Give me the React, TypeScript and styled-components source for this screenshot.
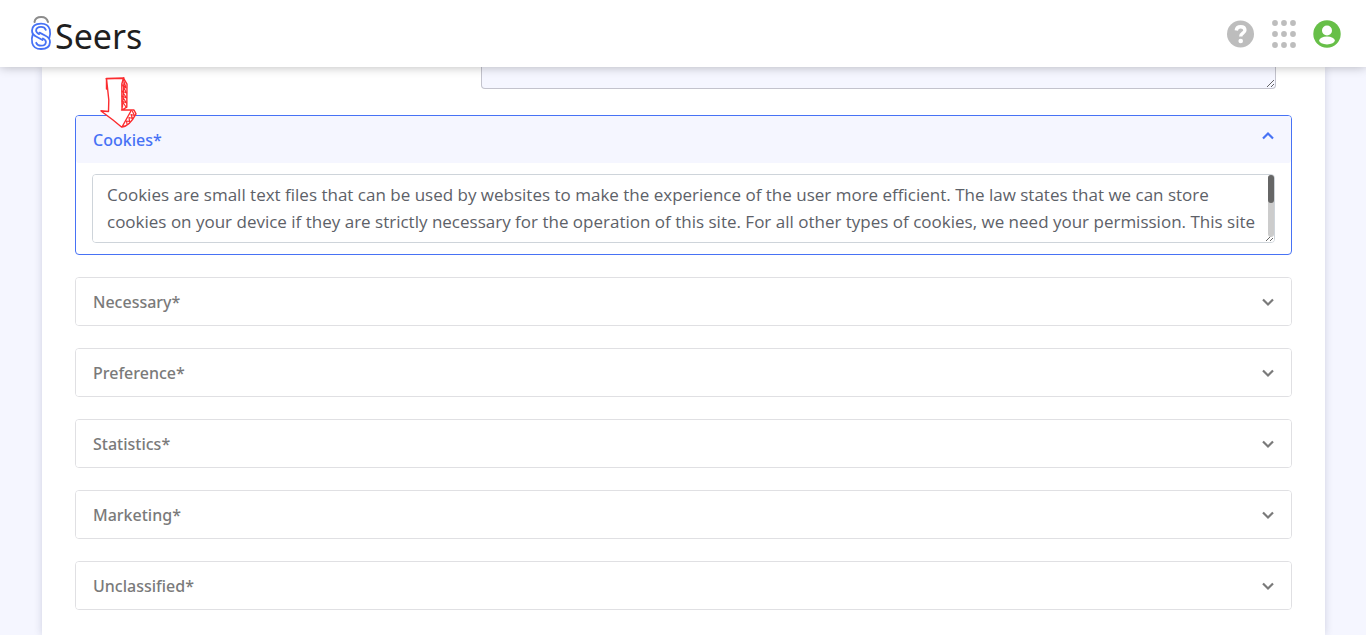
import React, { useState } from 'react';
import styled, { createGlobalStyle } from 'styled-components';

const GlobalStyle = createGlobalStyle`
  *, *::before, *::after { box-sizing: border-box; }
  body {
    margin: 0;
    background: #fff;
    color: #5d6168;
    font-family: "Open Sans", "Noto Sans", sans-serif;
  }
`;

const Header = styled.header`
  position: relative;
  z-index: 2;
  display: flex;
  align-items: center;
  justify-content: space-between;
  height: 67px;
  padding: 0 25px 0 30px;
  background: #fff;
  box-shadow: 0 0 10px rgba(0, 0, 0, 0.28);
`;

const Brand = styled.a`
  display: flex;
  align-items: center;
  gap: 3px;
  padding-bottom: 2px;
  color: #1f1f1f;
  text-decoration: none;
`;

const BrandName = styled.span`
  padding-top: 6px;
  font-family: "Noto Sans", sans-serif;
  font-size: 34px;
  line-height: 40px;
`;

const HeaderActions = styled.nav`
  display: flex;
  align-items: center;
  gap: 16px;
`;

const IconButton = styled.button`
  display: flex;
  padding: 0;
  border: 0;
  background: none;
  cursor: pointer;
`;

const Main = styled.main`
  padding: 0 41px 0 42px;
  background: #f5f6ff;
`;

const Card = styled.form`
  padding: 0 33px 25px;
  background: #fff;
  box-shadow: 0 0 8px rgba(40, 44, 90, 0.18);
`;

const BannerRow = styled.div`
  display: flex;
  justify-content: flex-end;
  padding-right: 16px;
  margin-bottom: 26px;
`;

const BannerText = styled.textarea`
  display: block;
  width: 795px;
  height: 22px;
  border: 1px solid #c3c3cd;
  border-top: 0;
  border-radius: 0 0 4px 4px;
  background: #f5f6ff;
  resize: vertical;
  outline: 0;
`;

const Sections = styled.div`
  display: flex;
  flex-direction: column;
  gap: 22px;
`;

const Section = styled.section<{ $open: boolean }>`
  position: relative;
  border: 1px solid ${(p) => (p.$open ? '#4772f5' : '#e0e0e3')};
  border-radius: 4px;
  background: #fff;
`;

const SectionToggle = styled.button<{ $open: boolean }>`
  display: flex;
  align-items: ${(p) => (p.$open ? 'flex-start' : 'center')};
  justify-content: space-between;
  width: 100%;
  height: 47px;
  padding: ${(p) => (p.$open ? '12px 16px 0 17px' : '0 16px 0 17px')};
  border: 0;
  border-radius: 3px;
  background: ${(p) => (p.$open ? '#f5f6ff' : '#fff')};
  color: ${(p) => (p.$open ? '#4772f5' : '#7a7a7a')};
  font: 500 16px/24px "Noto Sans", "Open Sans", sans-serif;
  text-align: left;
  cursor: pointer;
`;

const SectionBody = styled.div`
  padding: 11px 16px;
`;

const TextFrame = styled.div`
  position: relative;
`;

const SectionText = styled.textarea`
  display: block;
  width: 100%;
  height: 69px;
  padding: 6px 8px 0 14px;
  border: 1px solid #ced4da;
  border-radius: 4px;
  color: #5d6168;
  font: 400 17px/27px "Open Sans", "Noto Sans", sans-serif;
  resize: vertical;
  outline: 0;
  scrollbar-width: none;
`;

const ScrollTrack = styled.div`
  position: absolute;
  top: 1px;
  right: 1px;
  bottom: 6px;
  width: 6px;
  border-radius: 3px;
  background: #ccc;
  pointer-events: none;
`;

const ScrollThumb = styled.div`
  height: 28px;
  border-radius: 3px;
  background: #666;
`;

const Pointer = styled.svg`
  position: absolute;
  top: -40px;
  left: 24px;
  pointer-events: none;
`;

const cookiesCopy =
  'Cookies are small text files that can be used by websites to make the experience of the user more efficient. The law states that we can store cookies on your device if they are strictly necessary for the operation of this site. For all other types of cookies, we need your permission. This site uses different types of cookies. Some cookies are placed by third party services that appear on our pages. You can at any time change or withdraw your consent from the cookie declaration on our website.';

const sectionCopy: Record<string, string> = {
  Cookies: cookiesCopy,
  Necessary: '',
  Preference: '',
  Statistics: '',
  Marketing: '',
  Unclassified: '',
};

const spiral = (
  <>
    <path d="M19.300 23C20.300 20.500 20.300 17 19.800 14.500 18.800 10.500 15.500 8.600 11 8.600 5.500 8.600 2.200 11.300 2 15.500c-.1 3 1.500 4.800 4.500 6.300l6 3.200" />
    <path d="M15.800 14.800c-.8-2-2.600-2.900-4.800-2.900-2.800 0-4.800 1.500-4.900 3.700 0 1.600 1 2.500 3 3.500" />
  </>
);

const LogoMark = () => (
  <svg width="22" height="36" viewBox="0 0 22 36" fill="none" strokeLinecap="round" aria-hidden="true">
    <path d="M4.500 7C5 3.600 7.800 2 11.200 2s6 1.800 6.800 5" stroke="#8c8c8c" strokeWidth="2" />
    <g stroke="#4772f5" strokeWidth="1.800">
      <g>{spiral}</g>
      <g transform="rotate(180 11 21.300)">{spiral}</g>
    </g>
  </svg>
);

const HelpIcon = () => (
  <svg width="28" height="28" viewBox="0 0 28 28" fill="none" aria-hidden="true">
    <circle cx="13.500" cy="14" r="13.500" fill="#bdbdbd" />
    <path d="M9.300 10.500C9.500 7.800 11.300 6.700 13.700 6.700c2.500 0 4.200 1.300 4.200 3.500 0 3-4.200 3-4.200 6.300" stroke="#fff" strokeWidth="3.400" />
    <circle cx="13.700" cy="21" r="2.300" fill="#fff" />
  </svg>
);

const AppsIcon = () => (
  <svg width="26" height="28" viewBox="0 0 26 28" fill="#bdbdbd" aria-hidden="true">
    {[3, 14, 25].map((y) =>
      [4, 13, 22].map((x) => <circle key={`${x}-${y}`} cx={x} cy={y} r="2.900" />),
    )}
  </svg>
);

const UserIcon = () => (
  <svg width="28" height="28" viewBox="0 0 28 28" aria-hidden="true">
    <circle cx="14" cy="14" r="13.700" fill="#67bf48" />
    <circle cx="14" cy="10.500" r="5" fill="#fff" />
    <ellipse cx="14" cy="20.500" rx="7.800" ry="3.900" fill="#fff" />
  </svg>
);

const Chevron = ({ open }: { open: boolean }) => (
  <svg width="14" height="14" viewBox="0 0 14 14" fill="none" stroke="currentColor" strokeWidth="2.200" aria-hidden="true">
    <path d={open ? 'M2 10.500 7 5.500l5 5' : 'M2 4.500l5 5 5-5'} />
  </svg>
);

const SketchArrow = () => (
  <Pointer width="38" height="52" viewBox="0 0 38 52" fill="none" stroke="#fb2c2f" strokeWidth="1.400" strokeLinejoin="round" strokeLinecap="round" aria-hidden="true">
    <path d="M6.500 2.500 24 2 21.500 8 21.800 33.500H34L36 38C33 44 29 50 22 51L1 35l7.500.500L8.800 24Z" fill="#fff" stroke="none" />
    <path d="M6.500 13V2.500L24 2M6.500 2.500 8.800 24 8.500 35.500 1 35 13 44l8.500 7M6 2.800l17.500-.600 3.500 6-.200 23-4.800 2.800L21.800 8l1.700-6M1 34.800l7.300.700M21.500 34H34l2 3.800C33 43.500 29 50 22 51L31.500 34" />
    <path d="M23.500 4 26 12l-3.500-3 4 8-4.500-2 4.500 7-4.500-2 4.500 7-4.500-2 4 6M24 6l-1.500 25M32.500 35.500l2 4-3.500-1 1.500 4-3.500-1 .5 4-3-.5.5 3" strokeWidth="1.200" />
  </Pointer>
);

export default function App() {
  const [openName, setOpenName] = useState('Cookies');

  return (
    <>
      <GlobalStyle />
      <Header>
        <Brand href="#">
          <LogoMark />
          <BrandName>Seers</BrandName>
        </Brand>
        <HeaderActions>
          <IconButton type="button" aria-label="Help"><HelpIcon /></IconButton>
          <IconButton type="button" aria-label="Apps"><AppsIcon /></IconButton>
          <IconButton type="button" aria-label="Account"><UserIcon /></IconButton>
        </HeaderActions>
      </Header>
      <Main>
        <Card>
          <BannerRow>
            <BannerText aria-label="Banner text" />
          </BannerRow>
          <Sections>
            {Object.keys(sectionCopy).map((name) => {
              const open = name === openName;
              return (
                <Section key={name} $open={open}>
                  <SectionToggle
                    type="button"
                    $open={open}
                    aria-expanded={open}
                    onClick={() => setOpenName(open ? '' : name)}
                  >
                    <span id={`label-${name}`}>{name}*</span>
                    <Chevron open={open} />
                  </SectionToggle>
                  {open && (
                    <SectionBody>
                      <TextFrame>
                        <SectionText aria-labelledby={`label-${name}`} defaultValue={sectionCopy[name]} />
                        <ScrollTrack>
                          <ScrollThumb />
                        </ScrollTrack>
                      </TextFrame>
                    </SectionBody>
                  )}
                  {name === 'Cookies' && <SketchArrow />}
                </Section>
              );
            })}
          </Sections>
        </Card>
      </Main>
    </>
  );
}
